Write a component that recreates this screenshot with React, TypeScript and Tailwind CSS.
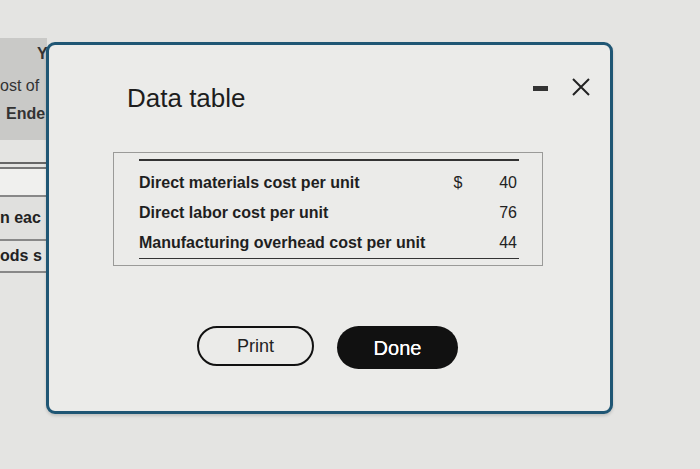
const rows = [
  { label: "Direct materials cost per unit", sign: "$", value: "40" },
  { label: "Direct labor cost per unit", sign: "", value: "76" },
  { label: "Manufacturing overhead cost per unit", sign: "", value: "44" },
];

export default function App() {
  return (
    <div
      className="relative w-[700px] h-[469px] overflow-hidden bg-[#e4e4e2] text-[#222]"
      style={{ fontFamily: '"Liberation Sans", Arial, sans-serif' }}
    >
      {/* page behind the dialog, only its left edge shows */}
      <div className="flex flex-col w-[47px] overflow-hidden pt-[38px]">
        <div className="h-[102px] bg-[#c9c9c7] flex flex-col text-[16px] text-[#333]">
          <div className="pl-[37px] pt-[4px] h-[26px] font-bold">Y</div>
          <div className="pt-[10px] h-[36px]">ost of</div>
          <div className="pl-[6px] pt-[2px] font-bold">Ende</div>
        </div>
        <div className="h-[22px]" />
        <div className="border-t-2 border-[#666] h-[5px]" />
        <div className="border-t-2 border-[#777] h-[28px] bg-[#f0f0ee]" />
        <div className="border-t-2 border-[#888] h-[44px] bg-[#e0e0de] flex items-center text-[16px] font-bold">
          <span>n eac</span>
        </div>
        <div className="border-t-2 border-[#888] h-[32px] flex items-center text-[16px] font-bold">
          <span>ods s</span>
        </div>
        <div className="border-t-2 border-[#888]" />
      </div>

      {/* dialog */}
      <div className="absolute left-[46px] top-[42px] w-[567px] h-[372px] rounded-[9px] border-[3px] border-[#1f5674] bg-[#ebebe9] shadow-[0_2px_3px_rgba(0,0,0,0.15)] flex flex-col">
        <div className="flex justify-between items-start pl-[78px] pr-[19px] pt-[32px]">
          <div className="pt-[6px] text-[26px] leading-[30px] text-[#1d1d1d]">Data table</div>
          <div className="flex items-center gap-[23px]">
            <div className="w-[15px] h-[5px] bg-[#333] mt-[2px]" />
            <svg width="20" height="20" viewBox="0 0 20 20" className="text-[#222]">
              <path d="M2 2 L18 18 M18 2 L2 18" stroke="currentColor" strokeWidth="2" fill="none" />
            </svg>
          </div>
        </div>

        <div className="ml-[64px] mt-[39px] w-[430px] border border-[#9a9a98] pl-[25px] pr-[23px] pt-[6px] pb-[6px]">
          <div className="border-t-2 border-[#333] pt-[7px]">
            {rows.map((row) => (
              <div key={row.label} className="flex items-center h-[30px] text-[16px]">
                <div className="flex-1 font-bold text-[#1f1f1f]">{row.label}</div>
                <div className="w-[12px] text-center">{row.sign}</div>
                <div className="w-[55px] text-right pr-[2px]">{row.value}</div>
              </div>
            ))}
          </div>
          <div className="border-t-[1.5px] border-[#333]" />
        </div>

        <div className="flex justify-center items-start gap-[23px] mt-[60px] pr-[4px]">
          <button
            type="button"
            className="w-[117px] h-[40px] rounded-full border-2 border-[#111] text-[18px] text-[#222] bg-transparent"
          >
            Print
          </button>
          <button
            type="button"
            className="w-[121px] h-[43px] rounded-full bg-[#111] text-white text-[20px] [text-shadow:0_0_0.4px_#fff]"
          >
            Done
          </button>
        </div>
      </div>
    </div>
  );
}
